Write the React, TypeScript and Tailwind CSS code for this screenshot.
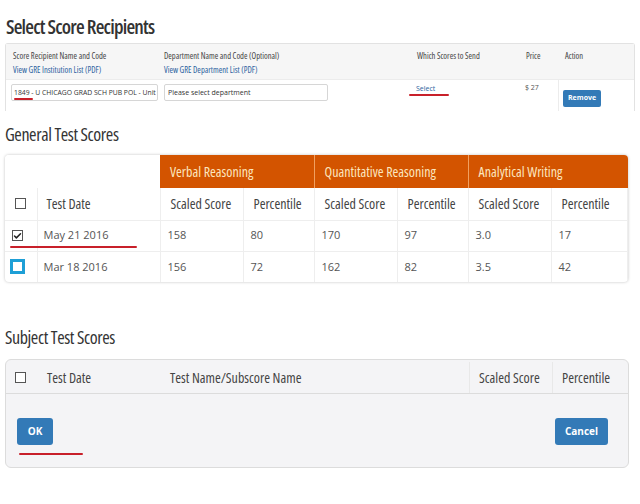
import { Check } from "lucide-react";

const cond = "font-['Open_Sans',sans-serif] font-stretch-condensed";
const body = "font-['Open_Sans','Liberation_Sans',sans-serif] font-stretch-normal";

const sections = ["Verbal Reasoning", "Quantitative Reasoning", "Analytical Writing"];

const rows = [
    { date: "May 21 2016", checked: true, scores: ["158", "80", "170", "97", "3.0", "17"] },
    { date: "Mar 18 2016", checked: false, scores: ["156", "72", "162", "82", "3.5", "42"] },
];

function Box({ checked, focus }: { checked?: boolean; focus?: boolean }) {
    if (focus) return <div className="w-[15px] h-[15px] border-[3px] border-[#1e9fd6] bg-white" />;
    return (
        <div className="w-[11px] h-[11px] border border-[#555] bg-white flex items-center justify-center">
            {checked && <Check className="w-[10px] h-[10px] text-[#222]" strokeWidth={4} />}
        </div>
    );
}

function Underline({ className }: { className: string }) {
    return <div className={`absolute h-[2px] rounded-full bg-[#c8202a] ${className}`} />;
}

export default function App() {
    return (
        <div className={`w-[640px] h-[504px] bg-white text-[#333] relative overflow-hidden whitespace-nowrap ${cond}`}>
            <h1 className="pl-[6px] pt-[14px] text-[20px] font-semibold leading-[26px] tracking-[-0.8px] text-[#333]">Select Score Recipients</h1>

            {/* recipients */}
            <div className="ml-[5px] mt-[3px] w-[630px] border-t border-x border-[#e2e2e2] rounded-t-[3px]">
                <div className="flex h-[35px] bg-[#f6f6f6] text-[8.5px] text-[#444] leading-[14px]">
                    <div className="w-[155px] pl-[7px] pt-[5px]">
                        <div>Score Recipient Name and Code</div>
                        <a className="text-[#2b5f9e]">View GRE Institution List (PDF)</a>
                    </div>
                    <div className="w-[252px] pl-[3px] pt-[5px]">
                        <div>Department Name and Code (Optional)</div>
                        <a className="text-[#2b5f9e]">View GRE Department List (PDF)</a>
                    </div>
                    <div className="w-[110px] pl-[4px] pt-[5px]">Which Scores to Send</div>
                    <div className="w-[35px] pl-[3px] pt-[5px]">Price</div>
                    <div className="flex-1 pl-[7px] pt-[5px]">Action</div>
                </div>
                <div className="flex h-[32px] bg-white border-t border-[#ececec] text-[7px]">
                    <div className="w-[155px] pl-[5px] pt-[4px]">
                        <div className={`h-[17px] w-[147px] border border-[#d6d6d6] rounded-[2px] px-[2px] leading-[15px] overflow-hidden text-[6.8px] text-[#333] ${body}`}>
                            1849 - U CHICAGO GRAD SCH PUB POL - Unit
                        </div>
                    </div>
                    <div className="w-[252px] pl-[3px] pt-[4px]">
                        <div className={`h-[17px] w-[164px] border border-[#d6d6d6] rounded-[2px] px-[3px] leading-[15px] text-[#333] ${body}`}>
                            Please select department
                        </div>
                    </div>
                    <div className={`w-[110px] pl-[3px] pt-[4px] text-[#2b5f9e] ${body}`}>Select</div>
                    <div className={`w-[35px] pl-[2px] pt-[3px] text-[#555] ${body}`}>$ 27</div>
                    <div className="flex-1 border-l border-[#ececec] pl-[4px] pt-[10px]">
                        <button className={`h-[17px] px-[5px] rounded-[2px] bg-[#337ab7] text-white text-[7px] font-bold ${body}`}>Remove</button>
                    </div>
                </div>
            </div>
            <Underline className="left-[14px] top-[98px] w-[19px]" />
            <Underline className="left-[409px] top-[94px] w-[40px]" />

            <h2 className="pl-[5px] mt-[11px] text-[18px] leading-[24px] tracking-[-0.4px] text-[#333]">General Test Scores</h2>

            {/* general table */}
            <div className="ml-[5px] mt-[9px] w-[623px] rounded-[4px] shadow-[0_0_3px_rgba(0,0,0,0.25)] overflow-hidden">
                <table className="w-full table-fixed border-collapse text-[14px]">
                    <colgroup>
                        <col className="w-[32px]" />
                        <col className="w-[123px]" />
                        <col className="w-[83px]" />
                        <col className="w-[71px]" />
                        <col className="w-[83px]" />
                        <col className="w-[71px]" />
                        <col className="w-[83px]" />
                        <col />
                    </colgroup>
                    <thead>
                        <tr className="h-[33px]">
                            <th colSpan={2} className="bg-white" />
                            {sections.map((s, i) => (
                                <th
                                    key={s}
                                    colSpan={2}
                                    className={`bg-[#d35400] text-[#fce6bf] font-medium text-left pl-[10px] ${i > 0 ? "border-l border-[#f0a060]" : ""}`}
                                >
                                    {s}
                                </th>
                            ))}
                        </tr>
                        <tr className="h-[32px] font-normal text-[#444]">
                            <th className="pl-[10px] border-r border-[#eee]"><Box /></th>
                            <th className="text-left font-normal pl-[9px] border-r border-[#eee]">Test Date</th>
                            {[0, 1, 2].map((i) => (
                                <>
                                    <th key={`s${i}`} className="text-left font-normal pl-[10px] border-r border-[#eee]">Scaled Score</th>
                                    <th key={`p${i}`} className="text-left font-normal pl-[10px] border-r border-[#eee]">Percentile</th>
                                </>
                            ))}
                        </tr>
                    </thead>
                    <tbody className={`text-[11px] ${body}`}>
                        {rows.map((r) => (
                            <tr key={r.date} className="h-[31px] border-t border-[#eee]">
                                <td className={`border-r border-[#eee] ${r.checked ? "pl-[7px]" : "pl-[5px]"}`}>
                                    <Box checked={r.checked} focus={!r.checked} />
                                </td>
                                <td className="pl-[6px] border-r border-[#eee] text-[#555]">{r.date}</td>
                                {r.scores.map((v, i) => (
                                    <td key={i} className="pl-[7px] border-r border-[#eee] text-[#555]">{v}</td>
                                ))}
                            </tr>
                        ))}
                    </tbody>
                </table>
            </div>
            <Underline className="left-[10px] top-[246px] w-[127px]" />

            <h2 className="pl-[5px] mt-[43px] text-[18px] leading-[24px] tracking-[-0.4px] text-[#333]">Subject Test Scores</h2>

            {/* subject table */}
            <div className="ml-[5px] mt-[10px] w-[624px] h-[109px] rounded-[6px] border border-[#dcdcdc] bg-[#f4f4f6] pt-[2px]">
                <div className="flex h-[32px] items-center border-b border-[#dcdcdc] text-[14px] text-[#444]">
                    <div className="w-[32px] pl-[9px]"><Box /></div>
                    <div className="w-[123px] pl-[9px]">Test Date</div>
                    <div className="w-[308px] pl-[9px]">Test Name/Subscore Name</div>
                    <div className="w-[83px] pl-[9px] self-stretch flex items-center border-l border-[#e8e8e8]">Scaled Score</div>
                    <div className="flex-1 pl-[9px] self-stretch flex items-center border-l border-[#e8e8e8]">Percentile</div>
                </div>
                <div className="flex justify-between pl-[11px] pr-[20px] pt-[24px]">
                    <button className={`h-[27px] w-[36px] rounded-[3px] bg-[#337ab7] text-white text-[10px] font-bold ${body}`}>OK</button>
                    <button className={`h-[27px] w-[53px] rounded-[3px] bg-[#337ab7] text-white text-[10px] font-bold ${body}`}>Cancel</button>
                </div>
            </div>
            <Underline className="left-[19px] top-[453px] w-[64px]" />
        </div>
    );
}
